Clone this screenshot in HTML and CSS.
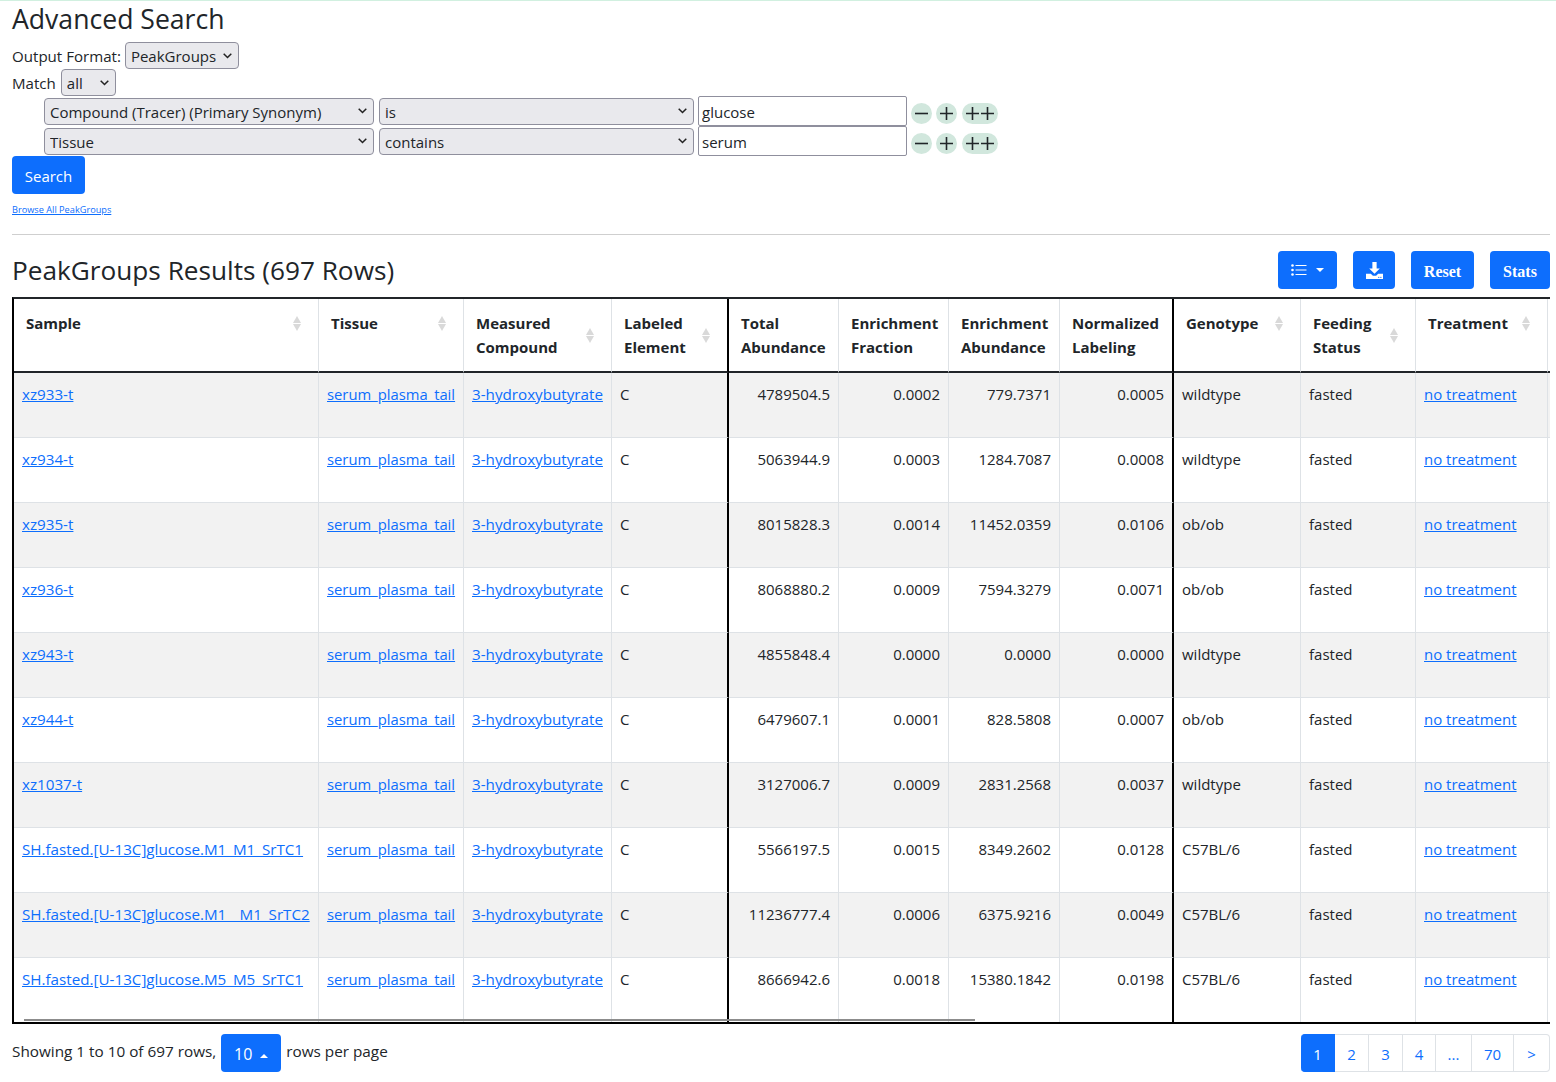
FILE: index.html
```html
<!DOCTYPE html>
<html lang="en">

<head>
    <meta charset="UTF-8">
    <meta name="viewport" content="width=device-width, initial-scale=1.0">
    <title>Advanced Search</title>
    <link rel="stylesheet" href="styles.css">
</head>

<body>
    <h3 class="page-title">Advanced Search</h3>

    <form class="search-form">
        <div class="form-line">
            <label>Output Format:</label>
            <select class="sel sel-format"><option>PeakGroups</option></select>
        </div>
        <div class="form-line">
            <label>Match</label>
            <select class="sel sel-match"><option>all</option></select>
        </div>
        <div class="query-row">
            <select class="sel sel-field"><option>Compound (Tracer) (Primary Synonym)</option></select>
            <select class="sel sel-op"><option>is</option></select>
            <input class="val" type="text" value="glucose">
            <div class="row-btns">
                <span class="round-btn"><svg width="13" height="13" viewBox="0 0 13 13"><path d="M0 6.5h13"/></svg></span>
                <span class="round-btn"><svg width="13" height="13" viewBox="0 0 13 13"><path d="M0 6.5h13M6.5 0v13"/></svg></span>
                <span class="round-btn wide"><svg width="28" height="13" viewBox="0 0 28 13"><path d="M0 6.5h13M6.5 0v13M15 6.5h13M21.5 0v13"/></svg></span>
            </div>
        </div>
        <div class="query-row">
            <select class="sel sel-field"><option>Tissue</option></select>
            <select class="sel sel-op"><option>contains</option></select>
            <input class="val" type="text" value="serum">
            <div class="row-btns">
                <span class="round-btn"><svg width="13" height="13" viewBox="0 0 13 13"><path d="M0 6.5h13"/></svg></span>
                <span class="round-btn"><svg width="13" height="13" viewBox="0 0 13 13"><path d="M0 6.5h13M6.5 0v13"/></svg></span>
                <span class="round-btn wide"><svg width="28" height="13" viewBox="0 0 28 13"><path d="M0 6.5h13M6.5 0v13M15 6.5h13M21.5 0v13"/></svg></span>
            </div>
        </div>
        <button class="btn search-btn" type="button">Search</button>
        <a class="browse-link" href="#">Browse All PeakGroups</a>
    </form>

    <hr class="rule">

    <div class="results-head">
        <h3 class="results-title">PeakGroups Results (697 Rows)</h3>
        <div class="toolbar">
            <button class="btn tool-btn cols-btn" type="button">
                <svg width="16" height="12" viewBox="0 0 16 12" fill="#fff"><circle cx="1.5" cy="1.5" r="1.3"/><circle cx="1.5" cy="6" r="1.3"/><circle cx="1.5" cy="10.5" r="1.3"/><rect x="4.5" y="1" width="11" height="1"/><rect x="4.5" y="5.5" width="11" height="1"/><rect x="4.5" y="10" width="11" height="1"/></svg>
                <span class="caret"></span>
            </button>
            <button class="btn tool-btn dl-btn" type="button">
                <svg width="17" height="17" viewBox="0 0 16 16" fill="#fff"><path d="M6 0h4v6h3l-5 5-5-5h3z"/><path d="M0 11h4.5l2 2h3l2-2H16v5H0z"/><rect x="11.5" y="14" width="1" height="1" fill="#0d6efd"/><rect x="13.5" y="14" width="1" height="1" fill="#0d6efd"/></svg>
            </button>
            <button class="btn tool-btn text-tool reset-btn" type="button">Reset</button>
            <button class="btn tool-btn text-tool stats-btn" type="button">Stats</button>
        </div>
    </div>

    <div class="table-wrap">
        <table class="results">
            <colgroup>
                <col class="c-sample"><col class="c-tissue"><col class="c-compound"><col class="c-element">
                <col class="c-total"><col class="c-frac"><col class="c-abund"><col class="c-norm">
                <col class="c-geno"><col class="c-feed"><col class="c-treat"><col class="c-rest">
            </colgroup>
            <thead>
                <tr>
                    <th><div class="th-in"><span>Sample</span><i class="sort"></i></div></th>
                    <th><div class="th-in"><span>Tissue</span><i class="sort"></i></div></th>
                    <th><div class="th-in"><span>Measured<br>Compound</span><i class="sort"></i></div></th>
                    <th class="heavy"><div class="th-in"><span>Labeled<br>Element</span><i class="sort"></i></div></th>
                    <th class="plain"><span>Total<br>Abundance</span></th>
                    <th class="plain"><span>Enrichment<br>Fraction</span></th>
                    <th class="plain"><span>Enrichment<br>Abundance</span></th>
                    <th class="plain heavy"><span>Normalized<br>Labeling</span></th>
                    <th><div class="th-in"><span>Genotype</span><i class="sort"></i></div></th>
                    <th><div class="th-in"><span>Feeding<br>Status</span><i class="sort"></i></div></th>
                    <th><div class="th-in"><span>Treatment</span><i class="sort"></i></div></th>
                    <th class="rest"></th>
                </tr>
            </thead>
            <tbody>
                <tr>
                    <td><a href="#">xz933-t</a></td><td><a href="#">serum_plasma_tail</a></td><td><a href="#">3-hydroxybutyrate</a></td><td class="heavy">C</td>
                    <td class="num">4789504.5</td><td class="num">0.0002</td><td class="num">779.7371</td><td class="num heavy">0.0005</td>
                    <td>wildtype</td><td>fasted</td><td><a href="#">no treatment</a></td><td class="rest"></td>
                </tr>
                <tr>
                    <td><a href="#">xz934-t</a></td><td><a href="#">serum_plasma_tail</a></td><td><a href="#">3-hydroxybutyrate</a></td><td class="heavy">C</td>
                    <td class="num">5063944.9</td><td class="num">0.0003</td><td class="num">1284.7087</td><td class="num heavy">0.0008</td>
                    <td>wildtype</td><td>fasted</td><td><a href="#">no treatment</a></td><td class="rest"></td>
                </tr>
                <tr>
                    <td><a href="#">xz935-t</a></td><td><a href="#">serum_plasma_tail</a></td><td><a href="#">3-hydroxybutyrate</a></td><td class="heavy">C</td>
                    <td class="num">8015828.3</td><td class="num">0.0014</td><td class="num">11452.0359</td><td class="num heavy">0.0106</td>
                    <td>ob/ob</td><td>fasted</td><td><a href="#">no treatment</a></td><td class="rest"></td>
                </tr>
                <tr>
                    <td><a href="#">xz936-t</a></td><td><a href="#">serum_plasma_tail</a></td><td><a href="#">3-hydroxybutyrate</a></td><td class="heavy">C</td>
                    <td class="num">8068880.2</td><td class="num">0.0009</td><td class="num">7594.3279</td><td class="num heavy">0.0071</td>
                    <td>ob/ob</td><td>fasted</td><td><a href="#">no treatment</a></td><td class="rest"></td>
                </tr>
                <tr>
                    <td><a href="#">xz943-t</a></td><td><a href="#">serum_plasma_tail</a></td><td><a href="#">3-hydroxybutyrate</a></td><td class="heavy">C</td>
                    <td class="num">4855848.4</td><td class="num">0.0000</td><td class="num">0.0000</td><td class="num heavy">0.0000</td>
                    <td>wildtype</td><td>fasted</td><td><a href="#">no treatment</a></td><td class="rest"></td>
                </tr>
                <tr>
                    <td><a href="#">xz944-t</a></td><td><a href="#">serum_plasma_tail</a></td><td><a href="#">3-hydroxybutyrate</a></td><td class="heavy">C</td>
                    <td class="num">6479607.1</td><td class="num">0.0001</td><td class="num">828.5808</td><td class="num heavy">0.0007</td>
                    <td>ob/ob</td><td>fasted</td><td><a href="#">no treatment</a></td><td class="rest"></td>
                </tr>
                <tr>
                    <td><a href="#">xz1037-t</a></td><td><a href="#">serum_plasma_tail</a></td><td><a href="#">3-hydroxybutyrate</a></td><td class="heavy">C</td>
                    <td class="num">3127006.7</td><td class="num">0.0009</td><td class="num">2831.2568</td><td class="num heavy">0.0037</td>
                    <td>wildtype</td><td>fasted</td><td><a href="#">no treatment</a></td><td class="rest"></td>
                </tr>
                <tr>
                    <td><a href="#">SH.fasted.[U-13C]glucose.M1_M1_SrTC1</a></td><td><a href="#">serum_plasma_tail</a></td><td><a href="#">3-hydroxybutyrate</a></td><td class="heavy">C</td>
                    <td class="num">5566197.5</td><td class="num">0.0015</td><td class="num">8349.2602</td><td class="num heavy">0.0128</td>
                    <td>C57BL/6</td><td>fasted</td><td><a href="#">no treatment</a></td><td class="rest"></td>
                </tr>
                <tr>
                    <td><a href="#">SH.fasted.[U-13C]glucose.M1__M1_SrTC2</a></td><td><a href="#">serum_plasma_tail</a></td><td><a href="#">3-hydroxybutyrate</a></td><td class="heavy">C</td>
                    <td class="num">11236777.4</td><td class="num">0.0006</td><td class="num">6375.9216</td><td class="num heavy">0.0049</td>
                    <td>C57BL/6</td><td>fasted</td><td><a href="#">no treatment</a></td><td class="rest"></td>
                </tr>
                <tr>
                    <td><a href="#">SH.fasted.[U-13C]glucose.M5_M5_SrTC1</a></td><td><a href="#">serum_plasma_tail</a></td><td><a href="#">3-hydroxybutyrate</a></td><td class="heavy">C</td>
                    <td class="num">8666942.6</td><td class="num">0.0018</td><td class="num">15380.1842</td><td class="num heavy">0.0198</td>
                    <td>C57BL/6</td><td>fasted</td><td><a href="#">no treatment</a></td><td class="rest"></td>
                </tr>
            </tbody>
        </table>
        <div class="scroll-thumb"></div>
    </div>

    <div class="table-foot">
        <div class="foot-info">
            <span class="foot-text">Showing 1 to 10 of 697 rows,</span>
            <button class="btn size-btn" type="button">10 <span class="caret up"></span></button>
            <span class="foot-text">rows per page</span>
        </div>
        <ul class="pager">
            <li class="active p1">1</li>
            <li class="p2">2</li>
            <li class="p3">3</li>
            <li class="p4">4</li>
            <li class="p5">...</li>
            <li class="p6">70</li>
            <li class="p7">&gt;</li>
        </ul>
    </div>
</body>

</html>
```

FILE: styles.css
```css
body {
    margin: 0;
    padding: 1px 6px 0 12px;
    border-top: 1px solid #d1f0e0;
    font-family: "Open Sans", "Noto Sans", sans-serif;
    font-size: 15px;
    line-height: 24px;
    color: #212529;
    background-color: #fff;
}

a {
    color: #0d6efd;
}

.page-title,
.results-title {
    margin: 0;
    font-size: 26.6px;
    font-weight: 400;
    line-height: 34px;
}

/* search form */
.search-form {
    margin-top: 6px;
}

.form-line {
    display: flex;
    align-items: center;
    gap: 4px;
    height: 27px;
    font-size: 15.1px;
}

.sel {
    height: 27px;
    padding: 1px 20px 0 5px;
    font-family: inherit;
    font-size: 15px;
    color: #212529;
    appearance: none;
    background: #e9e9ed url("data:image/svg+xml,%3Csvg xmlns='http://www.w3.org/2000/svg' width='9' height='6'%3E%3Cpath d='M.7.7l3.8 3.8L8.3.7' fill='none' stroke='%23222' stroke-width='1.5'/%3E%3C/svg%3E") no-repeat right 6px center;
    border: 1px solid #8f8f9d;
    border-radius: 4px;
}

.sel-format {
    width: 114px;
}

.sel-match {
    width: 55px;
    margin-left: 1px;
}

.query-row {
    display: flex;
    align-items: center;
    height: 30px;
    margin-left: 32px;
}

.sel-field {
    width: 330px;
    margin-right: 5px;
}

.sel-op {
    width: 315px;
    margin-right: 4px;
}

.val {
    box-sizing: border-box;
    width: 209px;
    height: 30px;
    padding: 1px 3px 0;
    font-family: inherit;
    font-size: 15px;
    color: #212529;
    border: 1px solid #8f8f9d;
    border-radius: 2px;
}

.row-btns {
    display: flex;
    gap: 4px;
    margin: 5px 0 0 4px;
}

.round-btn {
    display: flex;
    align-items: center;
    justify-content: center;
    width: 21px;
    height: 21px;
    background-color: #d1e7dd;
    border-radius: 11px;
}

.round-btn path {
    fill: none;
    stroke: #212529;
    stroke-width: 1.6;
}

.round-btn.wide {
    width: 36px;
    margin-left: 1px;
}

.btn {
    color: #fff;
    font-family: inherit;
    font-size: 15px;
    background-color: #0d6efd;
    border: none;
    border-radius: 4px;
}

.search-btn {
    display: block;
    width: 73px;
    height: 38px;
    padding: 1px 0 0;
}

.browse-link {
    display: block;
    width: 101px;
    margin-top: 8px;
    font-size: 9.2px;
    line-height: 16px;
    white-space: nowrap;
}

.rule {
    height: 1px;
    margin: 16px 0 16px;
    background-color: #cfcfcf;
    border: none;
}

/* results header */
.results-head {
    display: flex;
    justify-content: space-between;
    height: 38px;
    margin-bottom: 8px;
}

.results-title {
    font-size: 26.2px;
    line-height: 38px;
}

.toolbar {
    display: flex;
    gap: 16px;
}

.tool-btn {
    display: flex;
    align-items: center;
    justify-content: center;
    height: 38px;
    padding: 0;
}

.cols-btn {
    gap: 9px;
    width: 59px;
}

.dl-btn {
    width: 42px;
}

.text-tool {
    padding-top: 3px;
    font-family: "Liberation Serif", serif;
    font-size: 16px;
    font-weight: 700;
}

.reset-btn {
    width: 63px;
}

.stats-btn {
    width: 60px;
}

.caret {
    display: inline-block;
    border-top: 4px solid #fff;
    border-left: 4px solid transparent;
    border-right: 4px solid transparent;
}

.caret.up {
    margin-left: 4px;
    vertical-align: 2px;
    border-top: none;
    border-bottom: 4px solid #fff;
}

/* table */
.table-wrap {
    position: relative;
    overflow: hidden;
    border-top: 2px solid #212529;
    border-bottom: 2px solid #000;
    border-left: 2px solid #000;
}

.results {
    table-layout: fixed;
    width: 1554px;
    border-collapse: separate;
    border-spacing: 0;
}

.c-sample { width: 305px; }
.c-tissue { width: 145px; }
.c-compound { width: 148px; }
.c-element { width: 117px; }
.c-total { width: 110px; }
.c-frac { width: 110px; }
.c-abund { width: 111px; }
.c-norm { width: 114px; }
.c-geno { width: 127px; }
.c-feed { width: 115px; }
.c-treat { width: 132px; }
.c-rest { width: 20px; }

.results th {
    box-sizing: border-box;
    height: 74px;
    padding: 12px 17px 12px 12px;
    font-weight: 700;
    text-align: left;
    vertical-align: top;
    border-right: 1px solid #dee2e6;
    border-bottom: 2px solid #212529;
}

.results th.plain {
    padding-right: 0;
}

.results td {
    box-sizing: border-box;
    height: 65px;
    padding: 9px 8px 7px;
    white-space: nowrap;
    vertical-align: top;
    border-right: 1px solid #dee2e6;
    border-bottom: 1px solid #dee2e6;
}

.results td:nth-child(1) a,
.results td:nth-child(3) a {
    font-size: 15.2px;
}

.results td:nth-child(2) a {
    font-size: 14.8px;
}

.results tbody tr:nth-child(odd) td {
    background-color: #f2f2f2;
}

.results tbody tr:last-child td {
    height: 64px;
    border-bottom: none;
}

.results .heavy {
    border-right: 2px solid #000;
}

.results .rest {
    border-right: none;
}

.results td.num {
    text-align: right;
}

.th-in {
    display: flex;
    align-items: center;
    justify-content: space-between;
}

.sort {
    display: flex;
    flex: none;
    flex-direction: column;
    gap: 1px;
    width: 8px;
}

.sort::before,
.sort::after {
    content: "";
    display: block;
    border-left: 4px solid transparent;
    border-right: 4px solid transparent;
}

.sort::before {
    border-bottom: 7px solid #d9d9d9;
}

.sort::after {
    border-top: 7px solid #d9d9d9;
}

.scroll-thumb {
    position: absolute;
    left: 10px;
    bottom: 1px;
    width: 951px;
    height: 2px;
    background-color: #8c8c8c;
}

/* footer */
.table-foot {
    display: flex;
    justify-content: space-between;
    margin-top: 10px;
}

.foot-info {
    display: flex;
    align-items: center;
    gap: 5px;
    height: 38px;
}

.foot-text {
    padding-bottom: 4px;
    font-size: 15.3px;
}

.size-btn {
    width: 60px;
    height: 38px;
    padding: 1px 0 0;
    font-size: 16px;
}

.pager {
    display: flex;
    height: 38px;
    margin: 0;
    padding: 0;
    list-style: none;
}

.pager li {
    box-sizing: border-box;
    height: 38px;
    line-height: 38px;
    text-align: center;
    color: #0d6efd;
    border: 1px solid #dee2e6;
    border-left: none;
}

.pager .active {
    color: #fff;
    background-color: #0d6efd;
    border-color: #0d6efd;
    border-radius: 4px 0 0 4px;
}

.p1 { width: 34px; }
.p2 { width: 34px; }
.p3 { width: 34px; }
.p4 { width: 33px; }
.p5 { width: 36px; }
.p6 { width: 42px; }
.pager .p7 {
    width: 36px;
    border-radius: 0 4px 4px 0;
}
```
